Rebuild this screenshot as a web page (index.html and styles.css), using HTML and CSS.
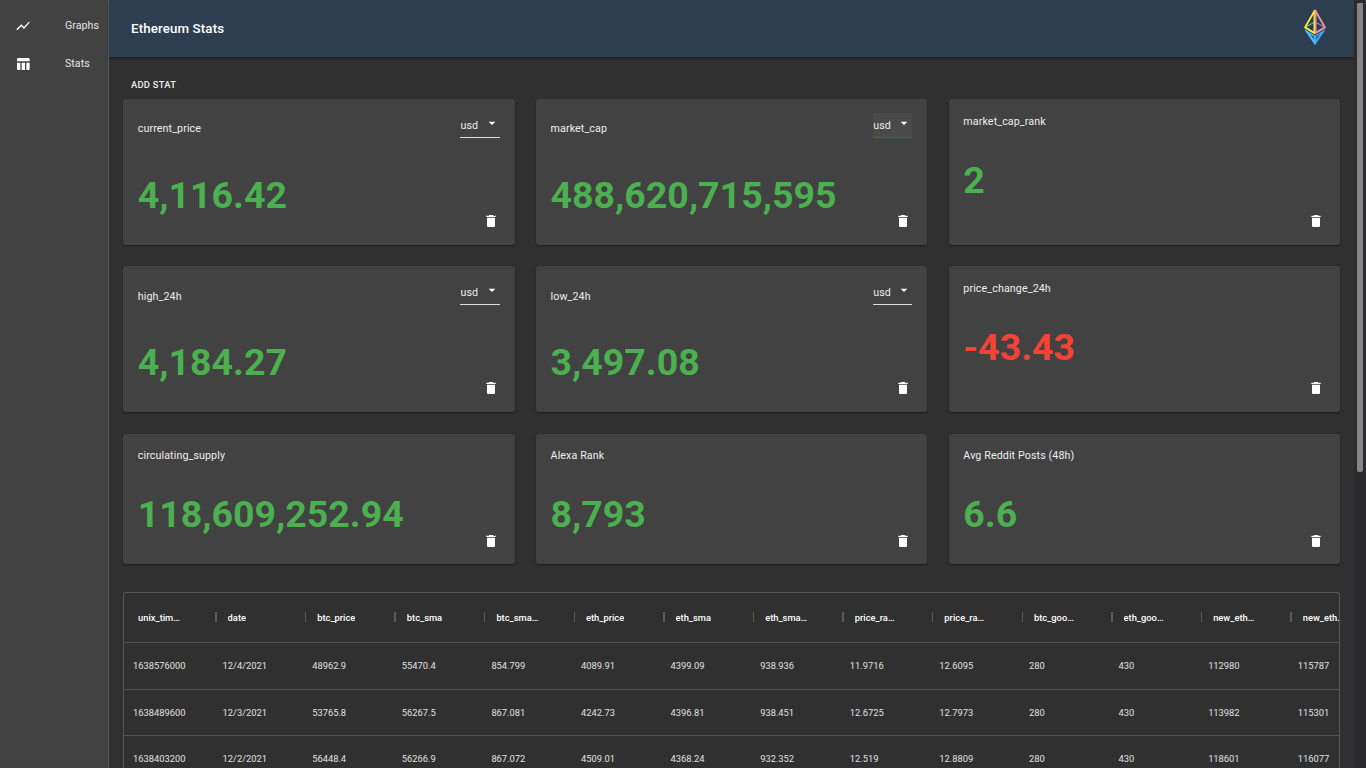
FILE: index.html
```html
<!DOCTYPE html>
<html>
	<head>
		<meta charset="utf-8">
		<title>Ethereum Stats</title>
		<link rel="stylesheet" href="styles.css">
	</head>
	<body>
		<nav class="sidebar">
			<a class="nav-item" href="#">
				<svg class="icon" viewBox="0 0 24 24"><path d="M3.5 18.49l6-6.01 4 4L22 6.92l-1.41-1.41-7.09 7.97-4-4L2 16.99z"/></svg>
				<span>Graphs</span>
			</a>
			<a class="nav-item" href="#">
				<svg class="icon" viewBox="0 0 24 24"><path d="M10 10.02h5V21h-5zM17 21h3c1.1 0 2-.9 2-2v-9h-5v11zm3-18H5c-1.1 0-2 .9-2 2v3h19V5c0-1.1-.9-2-2-2zM3 19c0 1.1.9 2 2 2h3V10H3v9z"/></svg>
				<span>Stats</span>
			</a>
		</nav>
		<div class="page">
			<header class="topbar">
				<h1>Ethereum Stats</h1>
				<svg class="logo" viewBox="0 0 22 36" fill="none" stroke-width="1.7" stroke-linejoin="round">
					<path d="M1.5 18 L11 13 V24 Z" stroke="#6fb98f" stroke-width="1.2"/>
					<path d="M20.5 18 L11 13 V24 Z" stroke="#a57fc8" stroke-width="1.2"/>
					<path d="M1 21 L11 27 V35.5 Z" fill="#4fc3f7" stroke="#4fc3f7" stroke-width="0.8"/>
					<path d="M21 21 L11 27 V35.5 Z" fill="#42a5f5" stroke="#42a5f5" stroke-width="0.8"/>
					<path d="M5.5 24.5 L10 27.5 V31 Z" fill="#35648f"/>
					<path d="M16.5 24.5 L12 27.5 V31 Z" fill="#35648f"/>
					<path d="M11 1 L1 18.5 L11 24.5" stroke="#ffeb3b"/>
					<path d="M11 1 L21 18.5 L11 24.5" stroke="#f7939f"/>
					<path d="M10.2 1.5 V24" stroke="#ffeb3b" stroke-width="1.4"/>
					<path d="M11.8 1.5 V24" stroke="#f7939f" stroke-width="1.4"/>
				</svg>
			</header>
			<main class="content">
				<a class="add-stat" href="#">ADD STAT</a>
				<section class="cards">
					<div class="card has-select">
						<div class="card-head">
							<span class="label">current_price</span>
							<div class="select"><span>usd</span><svg class="arrow" viewBox="0 0 24 24"><path d="M7 10l5 5 5-5z"/></svg></div>
						</div>
						<div class="card-body">
							<span class="value">4,116.42</span>
							<svg class="trash" viewBox="0 0 24 24"><path d="M6 19c0 1.1.9 2 2 2h8c1.1 0 2-.9 2-2V7H6v12zM19 4h-3.5l-1-1h-5l-1 1H5v2h14V4z"/></svg>
						</div>
					</div>
					<div class="card has-select">
						<div class="card-head">
							<span class="label">market_cap</span>
							<div class="select hover"><span>usd</span><svg class="arrow" viewBox="0 0 24 24"><path d="M7 10l5 5 5-5z"/></svg></div>
						</div>
						<div class="card-body">
							<span class="value">488,620,715,595</span>
							<svg class="trash" viewBox="0 0 24 24"><path d="M6 19c0 1.1.9 2 2 2h8c1.1 0 2-.9 2-2V7H6v12zM19 4h-3.5l-1-1h-5l-1 1H5v2h14V4z"/></svg>
						</div>
					</div>
					<div class="card">
						<div class="card-head"><span class="label">market_cap_rank</span></div>
						<div class="card-body">
							<span class="value">2</span>
							<svg class="trash" viewBox="0 0 24 24"><path d="M6 19c0 1.1.9 2 2 2h8c1.1 0 2-.9 2-2V7H6v12zM19 4h-3.5l-1-1h-5l-1 1H5v2h14V4z"/></svg>
						</div>
					</div>
					<div class="card has-select">
						<div class="card-head">
							<span class="label">high_24h</span>
							<div class="select"><span>usd</span><svg class="arrow" viewBox="0 0 24 24"><path d="M7 10l5 5 5-5z"/></svg></div>
						</div>
						<div class="card-body">
							<span class="value">4,184.27</span>
							<svg class="trash" viewBox="0 0 24 24"><path d="M6 19c0 1.1.9 2 2 2h8c1.1 0 2-.9 2-2V7H6v12zM19 4h-3.5l-1-1h-5l-1 1H5v2h14V4z"/></svg>
						</div>
					</div>
					<div class="card has-select">
						<div class="card-head">
							<span class="label">low_24h</span>
							<div class="select"><span>usd</span><svg class="arrow" viewBox="0 0 24 24"><path d="M7 10l5 5 5-5z"/></svg></div>
						</div>
						<div class="card-body">
							<span class="value">3,497.08</span>
							<svg class="trash" viewBox="0 0 24 24"><path d="M6 19c0 1.1.9 2 2 2h8c1.1 0 2-.9 2-2V7H6v12zM19 4h-3.5l-1-1h-5l-1 1H5v2h14V4z"/></svg>
						</div>
					</div>
					<div class="card">
						<div class="card-head"><span class="label">price_change_24h</span></div>
						<div class="card-body">
							<span class="value down">-43.43</span>
							<svg class="trash" viewBox="0 0 24 24"><path d="M6 19c0 1.1.9 2 2 2h8c1.1 0 2-.9 2-2V7H6v12zM19 4h-3.5l-1-1h-5l-1 1H5v2h14V4z"/></svg>
						</div>
					</div>
					<div class="card short">
						<div class="card-head"><span class="label">circulating_supply</span></div>
						<div class="card-body">
							<span class="value">118,609,252.94</span>
							<svg class="trash" viewBox="0 0 24 24"><path d="M6 19c0 1.1.9 2 2 2h8c1.1 0 2-.9 2-2V7H6v12zM19 4h-3.5l-1-1h-5l-1 1H5v2h14V4z"/></svg>
						</div>
					</div>
					<div class="card short">
						<div class="card-head"><span class="label">Alexa Rank</span></div>
						<div class="card-body">
							<span class="value">8,793</span>
							<svg class="trash" viewBox="0 0 24 24"><path d="M6 19c0 1.1.9 2 2 2h8c1.1 0 2-.9 2-2V7H6v12zM19 4h-3.5l-1-1h-5l-1 1H5v2h14V4z"/></svg>
						</div>
					</div>
					<div class="card short">
						<div class="card-head"><span class="label">Avg Reddit Posts (48h)</span></div>
						<div class="card-body">
							<span class="value">6.6</span>
							<svg class="trash" viewBox="0 0 24 24"><path d="M6 19c0 1.1.9 2 2 2h8c1.1 0 2-.9 2-2V7H6v12zM19 4h-3.5l-1-1h-5l-1 1H5v2h14V4z"/></svg>
						</div>
					</div>
				</section>
				<section class="grid">
					<div class="row head">
						<div class="col"><span>unix_timestamp</span></div>
						<div class="col"><span>date</span></div>
						<div class="col"><span>btc_price</span></div>
						<div class="col"><span>btc_sma</span></div>
						<div class="col"><span>btc_sma_diff</span></div>
						<div class="col"><span>eth_price</span></div>
						<div class="col"><span>eth_sma</span></div>
						<div class="col"><span>eth_sma_diff</span></div>
						<div class="col narrow"><span>price_ratio_now</span></div>
						<div class="col narrow"><span>price_ratio_sma</span></div>
						<div class="col"><span>btc_google_trend</span></div>
						<div class="col"><span>eth_google_trend</span></div>
						<div class="col"><span>new_eth_addr</span></div>
						<div class="col"><span>new_eth_sma</span></div>
					</div>
					<div class="row">
						<div class="cell">1638576000</div><div class="cell">12/4/2021</div><div class="cell">48962.9</div><div class="cell">55470.4</div><div class="cell">854.799</div><div class="cell">4089.91</div><div class="cell">4399.09</div><div class="cell">938.936</div><div class="cell">11.9716</div><div class="cell">12.6095</div><div class="cell">280</div><div class="cell">430</div><div class="cell">112980</div><div class="cell">115787</div>
					</div>
					<div class="row">
						<div class="cell">1638489600</div><div class="cell">12/3/2021</div><div class="cell">53765.8</div><div class="cell">56267.5</div><div class="cell">867.081</div><div class="cell">4242.73</div><div class="cell">4396.81</div><div class="cell">938.451</div><div class="cell">12.6725</div><div class="cell">12.7973</div><div class="cell">280</div><div class="cell">430</div><div class="cell">113982</div><div class="cell">115301</div>
					</div>
					<div class="row">
						<div class="cell">1638403200</div><div class="cell">12/2/2021</div><div class="cell">56448.4</div><div class="cell">56266.9</div><div class="cell">867.072</div><div class="cell">4509.01</div><div class="cell">4368.24</div><div class="cell">932.352</div><div class="cell">12.519</div><div class="cell">12.8809</div><div class="cell">280</div><div class="cell">430</div><div class="cell">118601</div><div class="cell">116077</div>
					</div>
				</section>
			</main>
		</div>
		<div class="scrollbar"><div class="thumb"></div></div>
	</body>
</html>
```

FILE: styles.css
```css
* {margin:0; padding:0; box-sizing:border-box; }
html, body {height:100%; overflow:hidden; }
body {
	display:flex;
	background:#303030;
	color:#fff;
	font-family:Roboto, "Liberation Sans", sans-serif;
	font-size:10.7px;
	letter-spacing:0.1px;
}
a {color:inherit; text-decoration:none; }

.sidebar {
	width:109px;
	flex:none;
	background:#424242;
	border-right:1px solid #5d5d5d;
	padding-top:7px;
}
.nav-item {
	display:flex;
	align-items:center;
	height:38px;
	padding-left:15px;
	color:#e4e4e4;
}
.nav-item span {margin-left:34px; position:relative; top:-1px; letter-spacing:0; }
.icon {width:16px; height:16px; fill:#fff; }

.page {flex:1; min-width:0; display:flex; flex-direction:column; }
.topbar {
	height:57px;
	flex:none;
	display:flex;
	align-items:center;
	justify-content:space-between;
	padding:0 28px 0 22px;
	background:#2c3e50;
	box-shadow:0 2px 3px rgba(0,0,0,0.35);
}
.topbar h1 {font-size:13.3px; font-weight:500; letter-spacing:0.13px; }
.logo {width:22px; height:36px; margin-bottom:4px; }

.content {flex:1; min-height:0; overflow:hidden; padding:19px 13.8px 0 14.2px; }
.add-stat {
	display:block;
	height:23px;
	padding-left:7.8px;
	font-size:9.4px;
	font-weight:500;
	line-height:17px;
	letter-spacing:0.27px;
	color:#eee;
}

.cards {
	display:grid;
	grid-template-columns:repeat(3, 1fr);
	gap:21.4px 21.33px;
}
.card {
	display:flex;
	flex-direction:column;
	height:146px;
	padding:0 16px 16px 14.6px;
	background:#424242;
	border-radius:3px;
	box-shadow:0 1px 2px rgba(0,0,0,0.4);
}
.card.short {height:130px; padding-bottom:15px; }
.card-head {display:flex; justify-content:space-between; height:44px; padding-top:15px; }
.card.short .card-head {padding-top:14px; }
.has-select .card-head {height:55px; padding-top:14px; align-items:flex-start; }
.label {color:#eee; line-height:16px; }
.has-select .label {margin-top:8.4px; }
.select {
	display:flex;
	align-items:center;
	justify-content:space-between;
	width:39.2px;
	height:25px;
	margin-right:-1px;
	border-bottom:1px solid #ddd;
	color:#eee;
}
.select.hover {background:#4a4a4a; border-bottom-color:#3f51b5; }
.arrow {width:16px; height:16px; fill:#fff; position:relative; top:-2px; }

.card-body {flex:1; display:flex; justify-content:space-between; }
.value {
	margin-top:14px;
	font-size:37.5px;
	font-weight:700;
	line-height:47px;
	letter-spacing:0;
	color:#4caf50;
}
.has-select .value {margin-top:18px; }
.card.short .value {margin-top:13px; }
.value.down {color:#f44336; }
.trash {width:16px; height:16px; fill:#fff; align-self:flex-end; }

.grid {
	margin-top:28px;
	margin-left:-0.2px;
	border:1px solid #565656;
	border-bottom:0;
	border-radius:3px 3px 0 0;
	overflow:hidden;
}
.row {
	display:flex;
	height:46.67px;
	border-top:1px solid #515151;
	font-size:9.33px;
	letter-spacing:0;
}
.row.head {height:49.3px; border-top:0; font-weight:500; }
.col, .cell {flex:none; width:89.6px; }
.col {display:flex; align-items:center; padding-left:14px; position:relative; }
.col span {display:block; max-width:43px; overflow:hidden; white-space:nowrap; text-overflow:ellipsis; }
.col.narrow span {max-width:41px; }
.col::after {
	content:"";
	position:absolute;
	right:-3px;
	top:19px;
	width:1.4px;
	height:10px;
	background:#5a5a5a;
}
.cell {padding-left:9px; line-height:46px; color:#e0e0e0; }

.scrollbar {width:12px; flex:none; padding:3px; background:#2b2b2d; }
.thumb {width:6px; height:469px; background:#858585; border-radius:0 0 2px 2px; }
```
